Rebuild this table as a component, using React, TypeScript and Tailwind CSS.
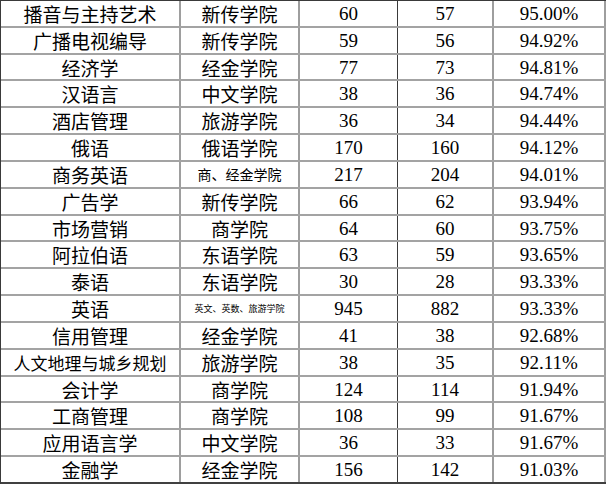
const rows: [string, string, string, string, string][] = [
  ["播音与主持艺术", "新传学院", "60", "57", "95.00%"],
  ["广播电视编导", "新传学院", "59", "56", "94.92%"],
  ["经济学", "经金学院", "77", "73", "94.81%"],
  ["汉语言", "中文学院", "38", "36", "94.74%"],
  ["酒店管理", "旅游学院", "36", "34", "94.44%"],
  ["俄语", "俄语学院", "170", "160", "94.12%"],
  ["商务英语", "商、经金学院", "217", "204", "94.01%"],
  ["广告学", "新传学院", "66", "62", "93.94%"],
  ["市场营销", "商学院", "64", "60", "93.75%"],
  ["阿拉伯语", "东语学院", "63", "59", "93.65%"],
  ["泰语", "东语学院", "30", "28", "93.33%"],
  ["英语", "英文、英数、旅游学院", "945", "882", "93.33%"],
  ["信用管理", "经金学院", "41", "38", "92.68%"],
  ["人文地理与城乡规划", "旅游学院", "38", "35", "92.11%"],
  ["会计学", "商学院", "124", "114", "91.94%"],
  ["工商管理", "商学院", "108", "99", "91.67%"],
  ["应用语言学", "中文学院", "36", "33", "91.67%"],
  ["金融学", "经金学院", "156", "142", "91.03%"],
];

const cjk = "font-['Noto_Sans_CJK_SC',sans-serif]";
const num = "font-['Liberation_Serif','Noto_Sans_CJK_SC',serif] text-[19px]";

function collegeSize(college: string) {
  if (college.length >= 10) return "text-[9px]";
  if (college.length >= 6) return "text-[14px]";
  return "text-[19px]";
}

export default function App() {
  return (
    <div className="w-[610px] h-[485px] bg-white">
      <div className="w-[606px] border-l border-t border-[#3a3a3a] text-black">
        {rows.map(([major, college, total, passed, rate], i) => (
          <div
            key={i}
            className={
              "flex h-[26.83px] border-b-2 " +
              (i === rows.length - 1 ? "border-[#404040]" : "border-[#a3a3a3]")
            }
          >
            <div
              className={
                "w-[180px] flex items-center justify-center border-r-2 border-[#9e9e9e] leading-none " +
                cjk +
                (major.length > 7 ? " text-[17px]" : " text-[19px]")
              }
            >
              {major}
            </div>
            <div
              className={
                "w-[119px] flex items-center justify-center border-r-2 border-[#9e9e9e] leading-none " +
                cjk +
                " " +
                collegeSize(college)
              }
            >
              {college}
            </div>
            <div className={"w-[98px] flex items-center justify-center border-r border-[#3a3a3a] leading-none " + num}>
              {total}
            </div>
            <div className={"w-[96px] flex items-center justify-center border-r-2 border-[#9e9e9e] leading-none " + num}>
              {passed}
            </div>
            <div className={"w-[112px] flex items-center justify-center border-r-2 border-[#9e9e9e] leading-none " + num}>
              {rate}
            </div>
          </div>
        ))}
      </div>
    </div>
  );
}
